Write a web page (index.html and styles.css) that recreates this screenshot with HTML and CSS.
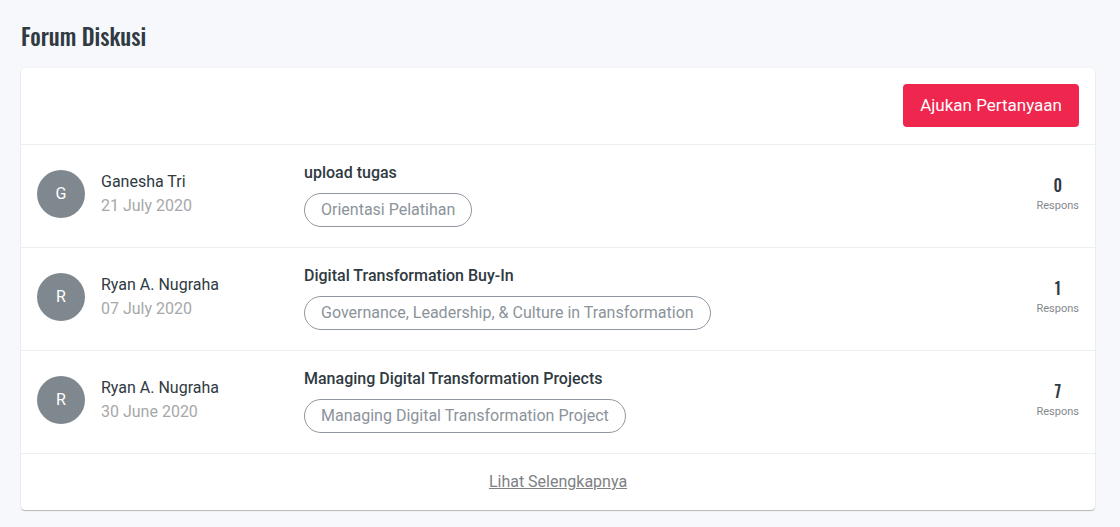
FILE: index.html
```html
<!DOCTYPE html>
<html lang="id">
<head>
<meta charset="utf-8">
<meta name="viewport" content="width=device-width, initial-scale=1">
<title>Forum Diskusi</title>
<link rel="stylesheet" href="styles.css">
</head>
<body>
<main class="forum">
  <h1 class="forum-title">Forum Diskusi</h1>
  <section class="card">
    <div class="card-head"><button class="ask" type="button">Ajukan Pertanyaan</button></div>
    <article class="topic">
      <span class="avatar">G</span>
      <div class="author"><div>Ganesha Tri</div><time datetime="2020-07-21">21 July 2020</time></div>
      <div class="subject"><h2>upload tugas</h2><span class="tag">Orientasi Pelatihan</span></div>
      <div class="replies"><strong>0</strong><span>Respons</span></div>
    </article>
    <article class="topic">
      <span class="avatar">R</span>
      <div class="author"><div>Ryan A. Nugraha</div><time datetime="2020-07-07">07 July 2020</time></div>
      <div class="subject"><h2>Digital Transformation Buy-In</h2><span class="tag">Governance, Leadership, &amp; Culture in Transformation</span></div>
      <div class="replies"><strong>1</strong><span>Respons</span></div>
    </article>
    <article class="topic">
      <span class="avatar">R</span>
      <div class="author"><div>Ryan A. Nugraha</div><time datetime="2020-06-30">30 June 2020</time></div>
      <div class="subject"><h2>Managing Digital Transformation Projects</h2><span class="tag">Managing Digital Transformation Project</span></div>
      <div class="replies"><strong>7</strong><span>Respons</span></div>
    </article>
    <div class="card-foot"><a href="#semua">Lihat Selengkapnya</a></div>
  </section>
</main>
</body>
</html>
```
FILE: styles.css
```css
* { box-sizing: border-box; }
body {
  margin: 0;
  background: #f7f8fc;
  color: #303a42;
  font: 16px/24px Roboto, "Liberation Sans", sans-serif;
}
.forum { padding: 20px 25px 16px 21px; }
.forum-title {
  margin: 0 0 16px;
  font: 500 23px/32px Oswald, "Roboto Condensed", "Open Sans Condensed", Roboto, sans-serif;
}
.card {
  background: #fff;
  border-radius: 4px;
  box-shadow: 0 1px 1px rgba(0, 0, 0, 0.24), 0 0 2px rgba(0, 0, 0, 0.08);
}
.card-head {
  display: flex;
  justify-content: flex-end;
  padding: 16px 16px 17px;
}
.ask {
  padding: 9px 17px 10px;
  border: 0;
  border-radius: 4px;
  background: #ef264d;
  color: #fff;
  font: inherit;
  font-size: 17px;
}
.topic {
  display: flex;
  align-items: center;
  padding: 16px 16px 20px;
  border-top: 1px solid #edeff1;
}
.avatar {
  flex: none;
  width: 48px;
  height: 48px;
  margin-right: 16px;
  border-radius: 50%;
  background: #80888f;
  color: #fff;
  line-height: 48px;
  text-align: center;
}
.author { flex: 0 0 203px; }
.author time { color: #a6a8aa; }
.subject { flex: 1; }
.subject h2 {
  margin: 0 0 8px;
  font-size: 16px;
  font-weight: 500;
  line-height: 24px;
}
.tag {
  display: inline-block;
  padding: 4px 16px;
  border: 1px solid #90979e;
  border-radius: 17px;
  color: #8b939b;
}
.replies {
  display: flex;
  flex-direction: column;
  align-items: center;
}
.replies strong {
  font: 500 16px/24px Oswald, "Roboto Condensed", Roboto, sans-serif;
}
.replies span {
  color: #85888b;
  font-size: 11px;
  line-height: 18px;
}
.card-foot {
  padding: 16px;
  border-top: 1px solid #edeff1;
  text-align: center;
}
.card-foot a { color: #7e8184; }
```
